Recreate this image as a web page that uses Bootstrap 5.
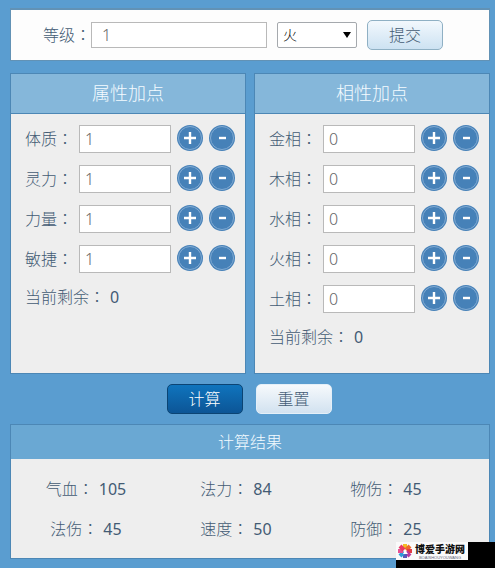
<!DOCTYPE html>
<html lang="zh-CN">
<head>
<meta charset="utf-8">
<meta name="viewport" content="width=device-width, initial-scale=1">
<title>属性计算</title>
<link href="https://cdn.jsdelivr.net/npm/bootstrap@5.3.0/dist/css/bootstrap.min.css" rel="stylesheet">
<style>
body{background:#5a9dd0;color:#435b74;font:16px/24px "Noto Sans","Noto Sans CJK SC",sans-serif;font-weight:300;padding:8px 5px 0 10px;min-height:100vh}
.panel{border:1px solid #4c87b5;background:#eee}
.panel-top{border-color:#6292b5;border-top-width:2px;background:#fdfdfd;padding:10px 0 10px 32px}
.panel h2{font-size:18px;font-weight:300;line-height:39px;margin:0;text-align:center;color:#f4fbff;background:#85b7da;border-bottom:1px solid #4c87b5}
.panel h2.result-title{font-size:16px;line-height:34px;background:#6aa8d3;border-bottom:0}
.stats{display:grid;grid-template-columns:minmax(0,1fr) minmax(0,1fr);gap:8px;margin:12px 0 10px}
.stat-body{padding:11px 10px 24px 14px}
.stat-row{height:28px;margin-bottom:12px}
.stat-row label{width:54px;flex:none}
.colon{font-family:"Noto Sans CJK TC",sans-serif;line-height:1}
.field{border:1px solid #b9b9b9;border-radius:0;background:#fff;color:#666;font:inherit;padding:0 5px;height:28px;width:0;min-width:0;flex:1}
.field:focus{outline:1px solid #4580b8}
.field-level{flex:0 1 176px;height:26px;padding-left:10px}
.picker{width:80px;height:26px;border:1px solid #a5a9ad;border-radius:2px;background:#fff;color:#000;font-size:14px;font-weight:300;padding:0 20px 0 5px;appearance:none;line-height:22px}
.picker-wrap{margin:0 10px}
.picker-wrap::after{content:"";position:absolute;right:6px;top:10px;border:4px solid transparent;border-top:6px solid #000;border-bottom:0;pointer-events:none}
.push{width:76px;height:30px;padding:0;border:1px solid #8fb0c4;border-radius:5px;background:linear-gradient(#f2f8fd,#cde2f2);color:#435b74;font-size:16px;line-height:26px;font-weight:300}
.push-main{background:linear-gradient(#0f74bd,#0c5596);border-color:#0b4474;color:#fff}
.push-reset{background:linear-gradient(#f6f9fc,#d2e2f0);border-color:#e4eff8}
.actions{padding-right:2px;gap:13px}
.results-panel{margin-top:10px}
.round{width:26px;height:26px;flex:none;margin:-2px 0 0 6px;padding:0;border:0;background:none;display:block}
.round svg{display:block}
.results{padding:18px 28px 17px 0}
.results .row{row-gap:16px}
.results .row>div{line-height:24px;text-align:center}
.num{font-weight:400;margin-left:5px}
.mark-box{right:0;top:542px;width:99px;height:26px;background:#000}
.mark-logo{width:72px;height:18px;background:#fafafa;color:#111}
.mark-name{font:900 10px/12px "Noto Sans CJK SC",sans-serif}
.mark-sub{font:4px/5px "Liberation Sans",sans-serif;color:#667;white-space:nowrap;text-align:center}
.mark-text{margin-left:1px}
</style>
<script src="https://cdn.jsdelivr.net/npm/bootstrap@5.3.0/dist/js/bootstrap.bundle.min.js"></script>
</head>
<body class="position-relative">
<svg width="0" height="0" class="position-absolute" aria-hidden="true">
<symbol id="plus" viewBox="0 0 26 26"><circle cx="13" cy="13" r="13" fill="#4681b8"/><circle cx="13" cy="13" r="11.5" fill="none" stroke="#82abd3"/><path d="M13 7v12M7 13h12" stroke="#fff" stroke-width="2.4"/></symbol>
<symbol id="minus" viewBox="0 0 26 26"><circle cx="13" cy="13" r="13" fill="#4681b8"/><circle cx="13" cy="13" r="11.5" fill="none" stroke="#82abd3"/><path d="M10 13h7" stroke="#fff" stroke-width="2.4"/></symbol>
</svg>
<form class="panel panel-top d-flex align-items-center">
<label for="level">等级<span class="colon" lang="zh-TW">：</span></label>
<input class="field field-level" id="level" value="1">
<div class="picker-wrap position-relative d-flex"><select class="picker" aria-label="属性"><option>火</option><option>水</option><option>木</option><option>金</option><option>土</option></select></div>
<button type="button" class="push">提交</button>
</form>
<main>
<div class="stats">
<section class="panel"><h2>属性加点</h2><div class="stat-body">
<div class="stat-row d-flex align-items-center"><label for="a1">体质<span class="colon" lang="zh-TW">：</span></label><input class="field" id="a1" value="1"><button class="round" aria-label="加"><svg width="26" height="26"><use href="#plus"/></svg></button><button class="round" aria-label="减"><svg width="26" height="26"><use href="#minus"/></svg></button></div>
<div class="stat-row d-flex align-items-center"><label for="a2">灵力<span class="colon" lang="zh-TW">：</span></label><input class="field" id="a2" value="1"><button class="round" aria-label="加"><svg width="26" height="26"><use href="#plus"/></svg></button><button class="round" aria-label="减"><svg width="26" height="26"><use href="#minus"/></svg></button></div>
<div class="stat-row d-flex align-items-center"><label for="a3">力量<span class="colon" lang="zh-TW">：</span></label><input class="field" id="a3" value="1"><button class="round" aria-label="加"><svg width="26" height="26"><use href="#plus"/></svg></button><button class="round" aria-label="减"><svg width="26" height="26"><use href="#minus"/></svg></button></div>
<div class="stat-row d-flex align-items-center"><label for="a4">敏捷<span class="colon" lang="zh-TW">：</span></label><input class="field" id="a4" value="1"><button class="round" aria-label="加"><svg width="26" height="26"><use href="#plus"/></svg></button><button class="round" aria-label="减"><svg width="26" height="26"><use href="#minus"/></svg></button></div>
<div>当前剩余<span class="colon" lang="zh-TW">：</span><span class="num">0</span></div>
</div></section>
<section class="panel"><h2>相性加点</h2><div class="stat-body">
<div class="stat-row d-flex align-items-center"><label for="b1">金相<span class="colon" lang="zh-TW">：</span></label><input class="field" id="b1" value="0"><button class="round" aria-label="加"><svg width="26" height="26"><use href="#plus"/></svg></button><button class="round" aria-label="减"><svg width="26" height="26"><use href="#minus"/></svg></button></div>
<div class="stat-row d-flex align-items-center"><label for="b2">木相<span class="colon" lang="zh-TW">：</span></label><input class="field" id="b2" value="0"><button class="round" aria-label="加"><svg width="26" height="26"><use href="#plus"/></svg></button><button class="round" aria-label="减"><svg width="26" height="26"><use href="#minus"/></svg></button></div>
<div class="stat-row d-flex align-items-center"><label for="b3">水相<span class="colon" lang="zh-TW">：</span></label><input class="field" id="b3" value="0"><button class="round" aria-label="加"><svg width="26" height="26"><use href="#plus"/></svg></button><button class="round" aria-label="减"><svg width="26" height="26"><use href="#minus"/></svg></button></div>
<div class="stat-row d-flex align-items-center"><label for="b4">火相<span class="colon" lang="zh-TW">：</span></label><input class="field" id="b4" value="0"><button class="round" aria-label="加"><svg width="26" height="26"><use href="#plus"/></svg></button><button class="round" aria-label="减"><svg width="26" height="26"><use href="#minus"/></svg></button></div>
<div class="stat-row d-flex align-items-center"><label for="b5">土相<span class="colon" lang="zh-TW">：</span></label><input class="field" id="b5" value="0"><button class="round" aria-label="加"><svg width="26" height="26"><use href="#plus"/></svg></button><button class="round" aria-label="减"><svg width="26" height="26"><use href="#minus"/></svg></button></div>
<div>当前剩余<span class="colon" lang="zh-TW">：</span><span class="num">0</span></div>
</div></section>
</div>
<div class="actions d-flex justify-content-center">
<button type="button" class="push push-main">计算</button>
<button type="button" class="push push-reset">重置</button>
</div>
<section class="panel results-panel"><h2 class="result-title">计算结果</h2>
<div class="results"><div class="row g-0">
<div class="col-4">气血<span class="colon" lang="zh-TW">：</span><span class="num">105</span></div>
<div class="col-4">法力<span class="colon" lang="zh-TW">：</span><span class="num">84</span></div>
<div class="col-4">物伤<span class="colon" lang="zh-TW">：</span><span class="num">45</span></div>
<div class="col-4">法伤<span class="colon" lang="zh-TW">：</span><span class="num">45</span></div>
<div class="col-4">速度<span class="colon" lang="zh-TW">：</span><span class="num">50</span></div>
<div class="col-4">防御<span class="colon" lang="zh-TW">：</span><span class="num">25</span></div>
</div></div></section>
</main>
<div class="mark-box position-absolute"><div class="mark-logo d-flex align-items-center">
<svg width="18" height="18" viewBox="0 0 18 18" class="flex-shrink-0" aria-hidden="true"><g stroke-width="4" fill="none"><path d="M9 7V2" stroke="#f4bc22"/><path d="M10 8l4-4" stroke="#ee6b29"/><path d="M11 9h5" stroke="#e23b46"/><path d="M10 10l4 4" stroke="#b93ca0"/><path d="M9 11v5" stroke="#5a55b8"/><path d="M8 10l-4 4" stroke="#309bd8"/><path d="M7 9H2" stroke="#e64f91"/><path d="M8 8L4 4" stroke="#e93a62"/></g><path d="M7 12l2-4 3 4z" fill="#fff"/></svg>
<div class="mark-text"><div class="mark-name">博爱手游网</div><div class="mark-sub">BOAISHOUYOUWANG</div></div>
</div></div>
</body>
</html>
